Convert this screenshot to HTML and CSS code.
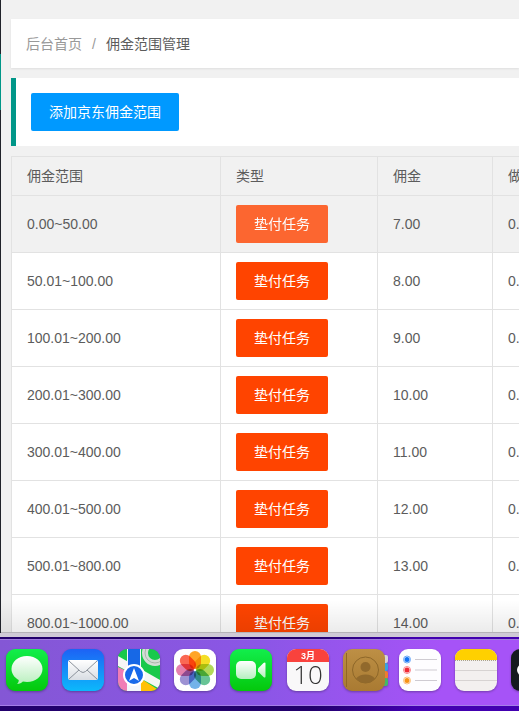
FILE: index.html
```html
<!DOCTYPE html>
<html lang="zh-CN">
<head>
    <meta charset="UTF-8">
    <meta name="viewport" content="width=device-width, initial-scale=1">
    <title>佣金范围管理</title>
    <link rel="stylesheet" href="styles.css">
</head>
<body>

    <div class="window">
        <div class="side"><span class="side-bar"></span></div>
        <main class="main">
            <nav class="breadcrumb">
                <a href="#">后台首页</a>
                <span class="sep">/</span>
                <cite>佣金范围管理</cite>
            </nav>

            <div class="quote">
                <button type="button" class="btn btn-normal">添加京东佣金范围</button>
            </div>

            <table class="table">
                <colgroup>
                    <col class="col-range">
                    <col class="col-type">
                    <col class="col-money">
                    <col class="col-rate">
                </colgroup>
                <thead>
                    <tr><th>佣金范围</th><th>类型</th><th>佣金</th><th>做</th></tr>
                </thead>
                <tbody>
                    <tr class="hover"><td>0.00~50.00</td><td><button type="button" class="btn btn-task">垫付任务</button></td><td>7.00</td><td>0.00</td></tr>
                    <tr><td>50.01~100.00</td><td><button type="button" class="btn btn-task">垫付任务</button></td><td>8.00</td><td>0.00</td></tr>
                    <tr><td>100.01~200.00</td><td><button type="button" class="btn btn-task">垫付任务</button></td><td>9.00</td><td>0.00</td></tr>
                    <tr><td>200.01~300.00</td><td><button type="button" class="btn btn-task">垫付任务</button></td><td>10.00</td><td>0.00</td></tr>
                    <tr><td>300.01~400.00</td><td><button type="button" class="btn btn-task">垫付任务</button></td><td>11.00</td><td>0.00</td></tr>
                    <tr><td>400.01~500.00</td><td><button type="button" class="btn btn-task">垫付任务</button></td><td>12.00</td><td>0.00</td></tr>
                    <tr><td>500.01~800.00</td><td><button type="button" class="btn btn-task">垫付任务</button></td><td>13.00</td><td>0.00</td></tr>
                    <tr><td>800.01~1000.00</td><td><button type="button" class="btn btn-task">垫付任务</button></td><td>14.00</td><td>0.00</td></tr>
                </tbody>
            </table>
        </main>
    </div>

    <footer class="dock">
        <button type="button" class="app" aria-label="信息">
            <svg width="42" height="42" viewBox="0 0 42 42">
                <defs>
                    <linearGradient id="msg" x2="0" y2="1"><stop stop-color="#12ee4c"/><stop offset="1" stop-color="#04c80c"/></linearGradient>
                    <linearGradient id="bubble" x2="0" y2="1"><stop stop-color="#fff"/><stop offset="1" stop-color="#b9efbe"/></linearGradient>
                </defs>
                <rect width="42" height="42" rx="9" fill="url(#msg)"/>
                <path d="M21 7C12 7 5.500 12.800 5.500 20c0 4.600 2.800 8.600 7.200 10.900.2 1.800-.6 2.900-1.700 4 2.600-.1 4.500-1 5.900-2.400 1.300.3 2.700.4 4.100.4 8.800 0 15.500-5.700 15.500-12.900S29.800 7 21 7z" fill="url(#bubble)"/>
            </svg>
        </button>
        <button type="button" class="app" aria-label="邮件">
            <svg width="42" height="42" viewBox="0 0 42 42">
                <defs>
                    <linearGradient id="mail" x2="0" y2="1"><stop stop-color="#1d62f5"/><stop offset="1" stop-color="#0cb9fb"/></linearGradient>
                    <linearGradient id="letter" x2="0" y2="1"><stop stop-color="#fff"/><stop offset="1" stop-color="#d8dde3"/></linearGradient>
                </defs>
                <rect width="42" height="42" rx="9" fill="url(#mail)"/>
                <rect x="6" y="11" width="30" height="20" rx="2" fill="url(#letter)"/>
                <path d="M7 12l11.500 10.500q2.500 2 5 0L35 12M7 30l10-9M35 30l-10-9" fill="none" stroke="#8b929b" stroke-width="1"/>
            </svg>
        </button>
        <button type="button" class="app" aria-label="地图">
            <svg width="42" height="42" viewBox="0 0 42 42">
                <defs><clipPath id="mapclip"><rect width="42" height="42" rx="9"/></clipPath></defs>
                <g clip-path="url(#mapclip)">
                    <rect width="42" height="42" fill="#18c94b"/>
                    <path d="M0 18l22 10v14H0z" fill="#f07db6"/>
                    <path d="M22 29l20 13H22z" fill="#ffc107"/>
                    <path d="M0 7l42 24v9L0 17z" fill="#f5f6f5"/>
                    <circle cx="37" cy="4" r="10" fill="none" stroke="#d3ddd5" stroke-width="6"/>
                    <circle cx="37" cy="4" r="10" fill="none" stroke="#a9b4ac" stroke-width="1"/>
                    <path d="M9 0h14v42H9z" fill="#f2f6fc"/>
                    <path d="M10 0h12v30H10z" fill="#1768e6"/>
                </g>
                <circle cx="16" cy="26" r="10" fill="#1769ea" stroke="#fff" stroke-width="2"/>
                <path d="M16 19l5 13-5-3-5 3z" fill="#fff"/>
            </svg>
        </button>
        <button type="button" class="app" aria-label="照片">
            <svg width="42" height="42" viewBox="0 0 42 42">
                <rect width="42" height="42" rx="9" fill="#fff"/>
                <g class="petals">
                    <rect x="15" y="2" width="12" height="18" rx="6" fill="#ff9500"/>
                    <rect x="15" y="2" width="12" height="18" rx="6" fill="#f2d800" transform="rotate(45 21 21)"/>
                    <rect x="15" y="2" width="12" height="18" rx="6" fill="#a5d33c" transform="rotate(90 21 21)"/>
                    <rect x="15" y="2" width="12" height="18" rx="6" fill="#4dba84" transform="rotate(135 21 21)"/>
                    <rect x="15" y="2" width="12" height="18" rx="6" fill="#5aa6e6" transform="rotate(180 21 21)"/>
                    <rect x="15" y="2" width="12" height="18" rx="6" fill="#8c7fcb" transform="rotate(225 21 21)"/>
                    <rect x="15" y="2" width="12" height="18" rx="6" fill="#e0699f" transform="rotate(270 21 21)"/>
                    <rect x="15" y="2" width="12" height="18" rx="6" fill="#fa4d35" transform="rotate(315 21 21)"/>
                </g>
                <circle cx="21" cy="21" r="1" fill="#fff"/>
            </svg>
        </button>
        <button type="button" class="app" aria-label="FaceTime">
            <svg width="42" height="42" viewBox="0 0 42 42">
                <defs>
                    <linearGradient id="cam" x2="0" y2="1"><stop stop-color="#fff"/><stop offset="1" stop-color="#b5efbf"/></linearGradient>
                </defs>
                <rect width="42" height="42" rx="9" fill="url(#msg)"/>
                <rect x="6" y="12" width="20" height="18" rx="5" fill="url(#cam)"/>
                <path d="M28 19.500l5.500-5.500q2-1.500 2 .8v12.400q0 2.300-2 .8L28 22.500z" fill="url(#cam)"/>
            </svg>
        </button>
        <button type="button" class="app" aria-label="日历">
            <svg width="43" height="42" viewBox="0 0 43 42">
                <rect x="1" width="42" height="42" rx="9" fill="#f9f8f9"/>
                <path d="M1 13V9a9 9 0 0 1 9-9h24a9 9 0 0 1 9 9v4z" fill="#f9423d"/>
                <text class="cal-month" x="22" y="10" text-anchor="middle">3月</text>
                <text class="cal-day" x="22" y="35" text-anchor="middle">10</text>
            </svg>
        </button>
        <button type="button" class="app" aria-label="通讯录">
            <svg width="42" height="42" viewBox="0 0 42 42">
                <defs>
                    <linearGradient id="book" x2="0" y2="1"><stop stop-color="#bd8f45"/><stop offset="1" stop-color="#a97a32"/></linearGradient>
                </defs>
                <rect x="36" y="6" width="9" height="8" rx="2" fill="#d5d3d8"/>
                <rect x="36" y="14" width="9" height="8" rx="2" fill="#38a3e0"/>
                <rect x="36" y="22" width="9" height="8" rx="2" fill="#ee7b30"/>
                <rect x="36" y="29" width="9" height="8" rx="2" fill="#43b768"/>
                <rect width="42" height="42" rx="9" fill="url(#book)"/>
                <path d="M3.500 4v34" stroke="#926724" stroke-width="1"/>
                <circle cx="22.500" cy="21" r="13" fill="none" stroke="#8e6729" stroke-width="1"/>
                <circle cx="22.500" cy="18" r="5" fill="#91692c"/>
                <path d="M13 29.500q3.500-4 9.500-4t9.500 4q-4 4.500-9.500 4.500T13 29.500z" fill="#91692c"/>
            </svg>
        </button>
        <button type="button" class="app" aria-label="提醒事项">
            <svg width="42" height="42" viewBox="0 0 42 42">
                <rect width="42" height="42" rx="9" fill="#fefdff"/>
                <g stroke-width="1">
                    <circle cx="8" cy="10.500" r="3.500" fill="none" stroke="#69a8fa"/><circle cx="8" cy="10.500" r="2.500" fill="#1172f4"/>
                    <circle cx="8" cy="21" r="3.500" fill="none" stroke="#fa858b"/><circle cx="8" cy="21" r="2.500" fill="#f02935"/>
                    <circle cx="8" cy="31.500" r="3.500" fill="none" stroke="#fcc078"/><circle cx="8" cy="31.500" r="2.500" fill="#f79216"/>
                </g>
                <path d="M16 10.500h22M16 21h22M16 31.500h22" stroke="#cfcbd2" stroke-width="1"/>
            </svg>
        </button>
        <button type="button" class="app" aria-label="备忘录">
            <svg width="42" height="42" viewBox="0 0 42 42">
                <rect width="42" height="42" rx="9" fill="#f3f0ef"/>
                <path d="M0 11V9a9 9 0 0 1 9-9h24a9 9 0 0 1 9 9v2z" fill="#ffd000"/>
                <path d="M0 11.500h42" stroke="#a9a18c" stroke-width="1" stroke-dasharray="1 1"/>
                <path d="M0 21.500h42M0 31.500h42" stroke="#d7d3d2" stroke-width="1"/>
            </svg>
        </button>
        <button type="button" class="app" aria-label="视频">
            <svg width="42" height="42" viewBox="0 0 42 42">
                <rect width="42" height="42" rx="9" fill="#15191e"/>
                <circle cx="12" cy="21" r="6" fill="#fff"/>
            </svg>
        </button>
    </footer>

</body>
</html>
```
FILE: styles.css
```css
* {
    box-sizing: border-box;
}

body {
    margin: 0;
    height: 100vh;
    display: flex;
    flex-direction: column;
    overflow: hidden;
    font: 14px/24px "Liberation Sans", "Noto Sans CJK SC", sans-serif;
    color: #5c5c5c;
    background: linear-gradient(90deg, #22006c 60%, #4200b0 80%);
}

button {
    font: inherit;
    border: none;
    padding: 0;
    cursor: pointer;
}

/* browser window */
.window {
    position: relative;
    flex: 1;
    min-height: 0;
    display: flex;
    overflow: hidden;
    background: #f1f1f1;
    border-bottom: 4px solid #cfcad6;
}

.window::after {
    content: "";
    position: absolute;
    left: 1px;
    right: 0;
    bottom: 0;
    height: 32px;
    background: linear-gradient(rgba(0, 0, 0, 0), rgba(0, 0, 0, 0.08));
    border-bottom: 1px solid #b5b3b8;
    pointer-events: none;
}

.side {
    flex: none;
    width: 1px;
    padding-top: 54px;
    background: #20222a;
}

.side-bar {
    display: block;
    height: 56px;
    background: #009688;
}

.main {
    flex: 1;
    min-width: 0;
    padding: 19px 0 0 10px;
}

.breadcrumb {
    display: flex;
    align-items: center;
    gap: 10px;
    height: 49px;
    padding: 0 15px;
    background: #fff;
    box-shadow: 0 1px 2px rgba(0, 0, 0, 0.08);
}

.breadcrumb a,
.sep {
    color: #999;
    text-decoration: none;
}

.breadcrumb cite {
    font-style: normal;
}

.quote {
    margin: 10px 0;
    padding: 15px;
    border-left: 5px solid #009688;
    background: #fff;
}

.btn {
    display: block;
    height: 38px;
    padding: 0 18px;
    line-height: 38px;
    color: #fff;
    border-radius: 2px;
    white-space: nowrap;
}

.btn-normal {
    background: #0099ff;
}

.btn-task {
    background: #ff4400;
}

.btn:hover,
.hover .btn-task {
    opacity: 0.8;
}

/* commission table */
.table {
    width: 100%;
    min-width: 640px;
    table-layout: fixed;
    border-collapse: collapse;
    background: #fff;
}

.col-range {
    width: 209px;
}

.col-type {
    width: 157px;
}

.col-money {
    width: 115px;
}

.table th,
.table td {
    padding: 9px 15px;
    border: 1px solid #e2e2e2;
    font-weight: 400;
    text-align: left;
}

.table th {
    padding: 7px 15px;
}

.table thead,
.table .hover {
    background: #f1f1f1;
}

/* dock */
.dock {
    flex: none;
    display: flex;
    gap: 14px;
    margin: 2px 0 5px;
    padding: 9px 6px 14px;
    overflow: hidden;
    background: linear-gradient(90deg, #8457d5, #8b56e6 50%, #a653f7 85%);
    border-top: 1px solid #9e7bdd;
    border-bottom: 1px solid #a57ee8;
}

.app {
    flex: none;
    background: none;
}

.app svg {
    display: block;
    overflow: visible;
    filter: drop-shadow(0 1px 1px rgba(0, 0, 0, 0.3));
}

.petals rect {
    mix-blend-mode: multiply;
    opacity: 0.85;
}

.cal-month {
    font: 700 9px "Liberation Sans", "Noto Sans CJK SC", sans-serif;
    fill: #fff;
}

.cal-day {
    font: 300 26px "Open Sans", Roboto, sans-serif;
    fill: #333;
}
```
